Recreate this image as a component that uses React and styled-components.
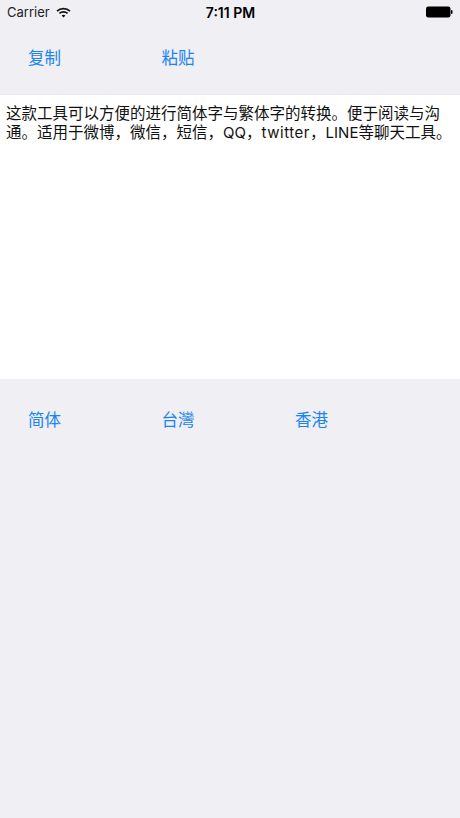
import React from "react";
import styled, { createGlobalStyle } from "styled-components";

const Global = createGlobalStyle`
  html, body { margin: 0; padding: 0; background: #efeff4; }
  body { font-family: "Noto Sans CJK SC", sans-serif; }
`;

const Screen = styled.div`
  width: 460px;
  height: 818px;
  background: #efeff4;
  display: flex;
  flex-direction: column;
  overflow: hidden;
`;

const StatusBar = styled.div`
  height: 24px;
  padding: 0 7px;
  display: grid;
  grid-template-columns: 1fr auto 1fr;
  align-items: center;
  color: #000;
`;

const Left = styled.div`
  display: flex;
  align-items: center;
  gap: 6px;
  font-family: Inter, "Liberation Sans", sans-serif;
  font-size: 13px;
  color: #222;
`;

const Time = styled.div`
  font-family: Inter, "Liberation Sans", sans-serif;
  font-weight: 600;
  font-size: 14px;
  margin-left: 1px;
`;

const Right = styled.div`
  display: flex;
  justify-content: flex-end;
`;

const ButtonRow = styled.div`
  height: ${(p) => p.$height}px;
  padding: ${(p) => p.$top}px 0 0 28px;
  box-sizing: border-box;
  display: flex;
  flex-shrink: 0;
`;

const LinkButton = styled.div`
  width: 133.5px;
  color: #1a84f0;
  font-family: "Noto Sans CJK SC", sans-serif;
  font-size: 16.5px;
  line-height: 22px;
`;

const TextPanel = styled.div`
  height: 285px;
  flex-shrink: 0;
  box-sizing: border-box;
  background: #fff;
  padding: 8px 6px 0;
  border-top: 1px solid #e9e9ee;
  color: #111;
  font-family: "Noto Sans CJK SC", sans-serif;
  font-size: 15.5px;
  line-height: 19px;
`;

const Latin = styled.span`
  font-family: Inter, "Liberation Sans", sans-serif;
  font-size: 15px;
  letter-spacing: ${(p) => p.$spacing || 0}px;
`;

const Wifi = () => (
  <svg width="15" height="11" viewBox="0 0 15 11" fill="none" stroke="#111" strokeWidth="1.7">
    <path d="M1 4.2C4.6 .8 10.4 .8 14 4.2" />
    <path d="M3.4 6.4C5.7 4.3 9.3 4.3 11.6 6.4" />
    <path d="M7.5 10.6L5.6 8.5C6.7 7.6 8.3 7.6 9.4 8.5Z" fill="#111" stroke="none" />
  </svg>
);

const Battery = () => (
  <svg width="27" height="12" viewBox="0 0 27 12">
    <rect x="0" y="0.5" width="24.5" height="11" rx="2.2" fill="#000" />
    <rect x="25" y="4" width="1.5" height="4" rx="0.7" fill="#000" />
  </svg>
);

export default function App() {
  return (
    <Screen>
      <Global />
      <StatusBar>
        <Left>Carrier <Wifi /></Left>
        <Time>7:11 PM</Time>
        <Right><Battery /></Right>
      </StatusBar>
      <ButtonRow $height={70} $top={22}>
        <LinkButton>复制</LinkButton>
        <LinkButton>粘贴</LinkButton>
      </ButtonRow>
      <TextPanel>
        这款工具可以方便的进行简体字与繁体字的转换。便于阅读与沟通。适用于微博，微信，短信，<Latin>QQ</Latin>，<Latin $spacing={0.55}>twitter</Latin>，<Latin>LINE</Latin>等聊天工具。
      </TextPanel>
      <ButtonRow $height={80} $top={29}>
        <LinkButton>简体</LinkButton>
        <LinkButton>台灣</LinkButton>
        <LinkButton>香港</LinkButton>
      </ButtonRow>
    </Screen>
  );
}
